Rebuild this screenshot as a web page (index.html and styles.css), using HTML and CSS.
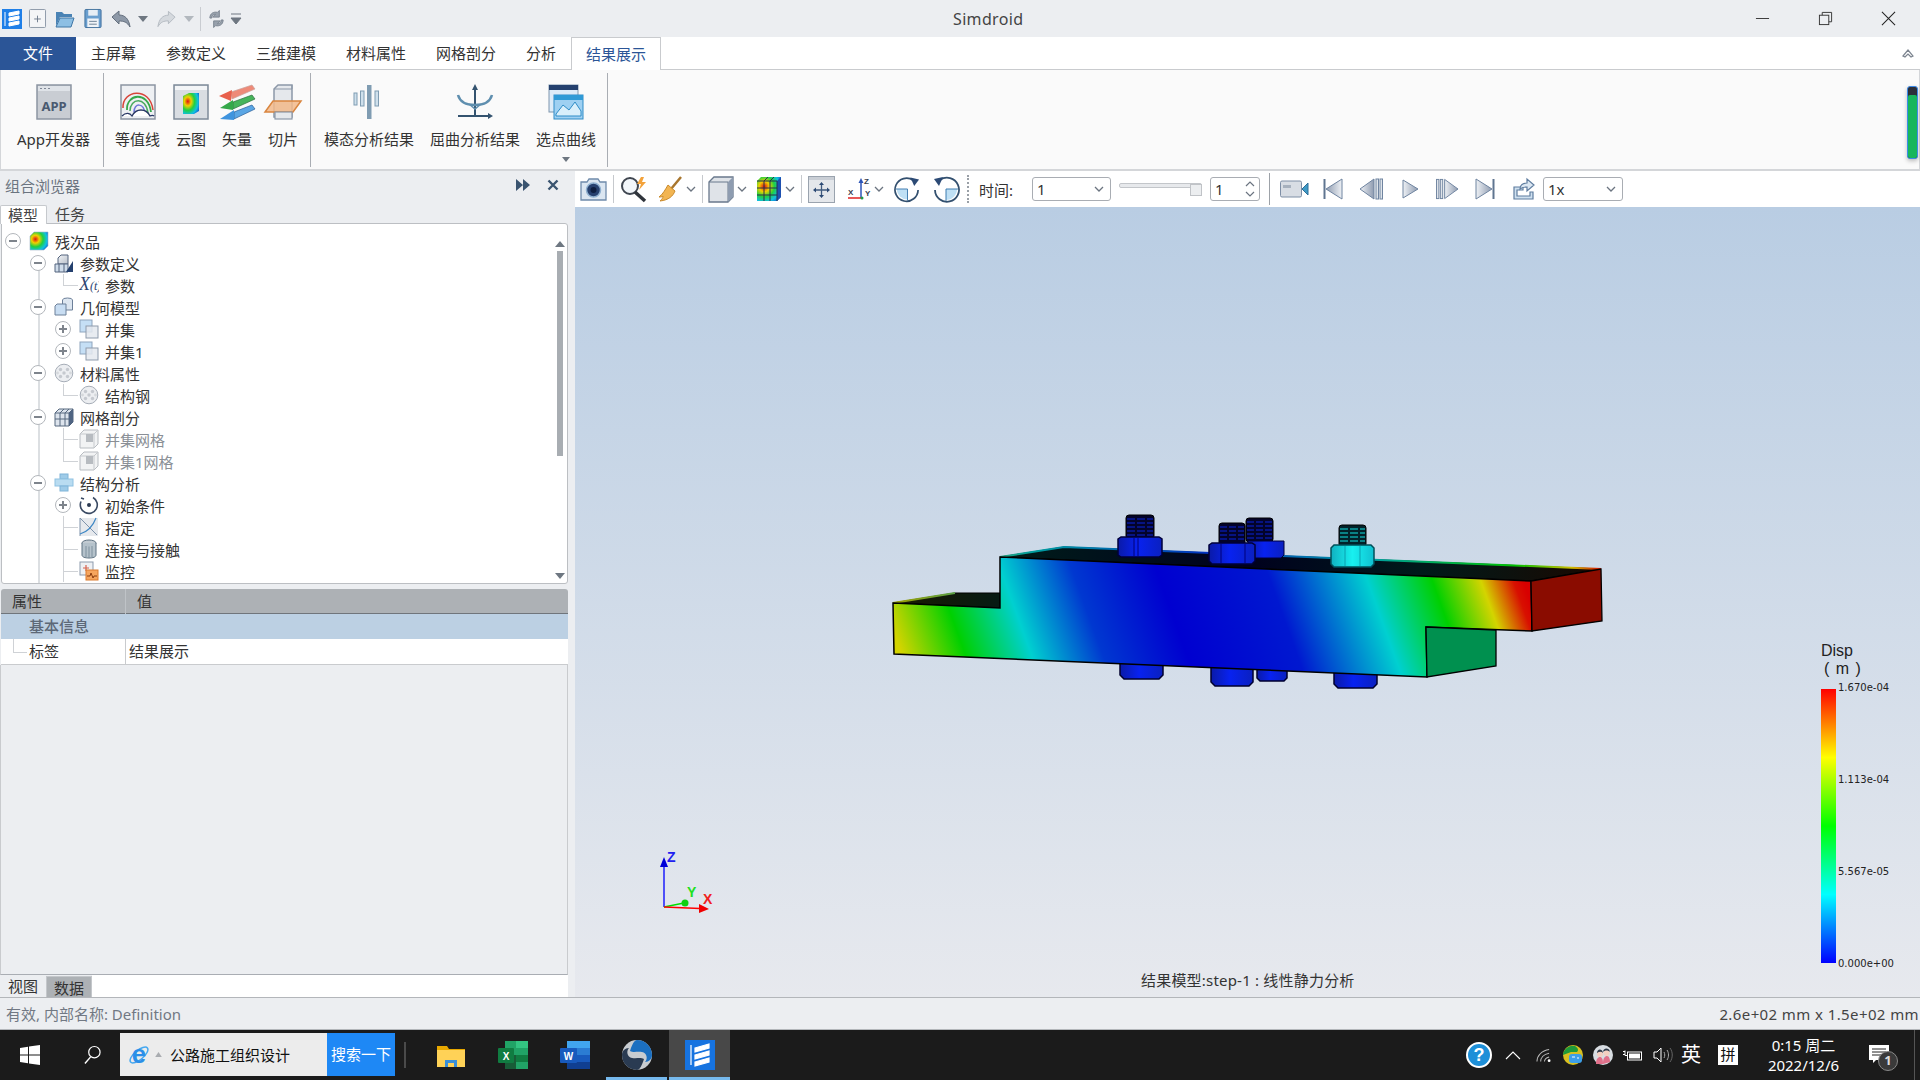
FILE: index.html
```html
<!DOCTYPE html>
<html lang="zh">
<head>
<meta charset="utf-8">
<title>Simdroid</title>
<link rel="stylesheet" href="styles.css">
</head>
<body>
<svg class="defs" aria-hidden="true">
  <defs>
    <radialGradient id="plot" cx="0.3" cy="0.4" r="0.85">
      <stop offset="0" stop-color="#e01010"/><stop offset=".25" stop-color="#f0d000"/><stop offset=".5" stop-color="#20d040"/><stop offset=".75" stop-color="#10c0e0"/><stop offset="1" stop-color="#1050d0"/>
    </radialGradient>
    <linearGradient id="steel" x1="0" y1="0" x2="1" y2="1"><stop offset="0" stop-color="#f2f4f7"/><stop offset="1" stop-color="#b8bfc9"/></linearGradient>
    <linearGradient id="transport" x1="0" y1="0" x2="1" y2="0"><stop offset="0" stop-color="#eef1f5"/><stop offset="1" stop-color="#8e9bb0"/></linearGradient>
    <linearGradient id="transportr" x1="1" y1="0" x2="0" y2="0"><stop offset="0" stop-color="#eef1f5"/><stop offset="1" stop-color="#8e9bb0"/></linearGradient>
    <linearGradient id="front" gradientUnits="userSpaceOnUse" x1="893" y1="630" x2="1466" y2="423">
      <stop offset="0" stop-color="#d4d400"/><stop offset=".098" stop-color="#00d000"/><stop offset=".2" stop-color="#00d0d0"/><stop offset=".31" stop-color="#0038d0"/><stop offset=".44" stop-color="#0000d0"/><stop offset=".61" stop-color="#0018d0"/><stop offset=".76" stop-color="#00d0d0"/><stop offset=".86" stop-color="#00d000"/><stop offset=".935" stop-color="#d4d400"/><stop offset=".985" stop-color="#d81000"/><stop offset="1" stop-color="#d80000"/>
    </linearGradient>
    <linearGradient id="topdark" gradientUnits="userSpaceOnUse" x1="893" y1="600" x2="1600" y2="570">
      <stop offset="0" stop-color="#1a1a00"/><stop offset=".2" stop-color="#001a1a"/><stop offset=".5" stop-color="#00001e"/><stop offset=".75" stop-color="#001a1a"/><stop offset="1" stop-color="#1a0800"/>
    </linearGradient>
    <linearGradient id="backedge" gradientUnits="userSpaceOnUse" x1="893" y1="600" x2="1600" y2="570">
      <stop offset="0" stop-color="#a0a000"/><stop offset=".2" stop-color="#00a0a0"/><stop offset=".45" stop-color="#0030c0"/><stop offset=".68" stop-color="#00a0a0"/><stop offset=".88" stop-color="#00c000"/><stop offset=".96" stop-color="#d0c000"/><stop offset="1" stop-color="#d01000"/>
    </linearGradient>
    <linearGradient id="nut" x1="0" y1="0" x2="1" y2="0"><stop offset="0" stop-color="#0a1aa8"/><stop offset=".45" stop-color="#0822f0"/><stop offset="1" stop-color="#0a20c0"/></linearGradient>
    <linearGradient id="nutc" x1="0" y1="0" x2="1" y2="0"><stop offset="0" stop-color="#10b0c0"/><stop offset=".5" stop-color="#18f0f0"/><stop offset="1" stop-color="#10c0d0"/></linearGradient>
    <symbol id="chev" viewBox="0 0 10 6"><path d="M1 1l4 4 4-4" fill="none" stroke="#6b7480" stroke-width="1.300"/></symbol>
    <symbol id="tri" viewBox="0 0 10 6"><path d="M0 0h10L5 6z" fill="#6e7781"/></symbol>
    <symbol id="i-plot" viewBox="0 0 20 20"><path d="M1 5l4-4h14v14l-4 4H1z" fill="url(#plot)" stroke="#9fb1c6" stroke-width=".6"/></symbol>
    <symbol id="i-param" viewBox="0 0 20 20"><path d="M4 5l3-3h7v9H4z" fill="url(#steel)" stroke="#54657e"/><path d="M1 11h13v8H1z" fill="#cfdcea" stroke="#54657e"/><path d="M5 11v8M10 11v8" stroke="#54657e"/><path d="M19 8v11h-7z" fill="#24406e"/></symbol>
    <symbol id="i-xt" viewBox="0 0 20 20"><text x="0" y="15" class="xt">X<tspan class="xts">(t)</tspan></text></symbol>
    <symbol id="i-geo" viewBox="0 0 20 20"><ellipse cx="13.500" cy="3" rx="5" ry="2" fill="#dfe8f2" stroke="#6d8099"/><path d="M8.500 3v10h10V3" fill="#dde6f0" stroke="#6d8099"/><path d="M1 9l2-2h9v11H1z" fill="#c8ddf2" stroke="#6d8099"/></symbol>
    <symbol id="i-union" viewBox="0 0 20 20"><rect x="1" y="1" width="12" height="12" fill="#c5dff5" stroke="#8fa5bd"/><rect x="7" y="7" width="12" height="12" fill="#e4e9ee" fill-opacity=".85" stroke="#8f9cac"/></symbol>
    <symbol id="i-mat" viewBox="0 0 20 20"><circle cx="10" cy="10" r="8.800" fill="#eceef1" stroke="#a6adb7"/><circle cx="6.500" cy="6.500" r="1.700" fill="#c5c9cf"/><circle cx="13.500" cy="6.500" r="1.700" fill="#c5c9cf"/><circle cx="10" cy="10" r="1.700" fill="#c5c9cf"/><circle cx="6.500" cy="13.500" r="1.700" fill="#c5c9cf"/><circle cx="13.500" cy="13.500" r="1.700" fill="#c5c9cf"/><circle cx="3.500" cy="10" r="1.400" fill="#d5d8dc"/><circle cx="16.500" cy="10" r="1.400" fill="#d5d8dc"/></symbol>
    <symbol id="i-mesh" viewBox="0 0 20 20"><path d="M1 6l4-4h14v13l-4 4H1z" fill="#dde4ed" stroke="#56687f"/><path d="M1 6h14v13M15 6l4-4M6 6v13M11 6v13M1 12h14M6 6l4-4M11 6l4-4" fill="none" stroke="#56687f"/><path d="M15 6l4-4v13l-4 4z" fill="#4f6482"/></symbol>
    <symbol id="i-meshitem" viewBox="0 0 20 20"><path d="M1 5l4-4h14v14l-4 4H1z" fill="#f2f3f4" stroke="#b8bcc1"/><path d="M1 5h14v14M15 5l4-4" fill="none" stroke="#c6c9cd"/><rect x="7" y="5" width="7" height="8" fill="#b7bbc0"/></symbol>
    <symbol id="i-struct" viewBox="0 0 20 20"><rect x="6" y="1" width="8" height="5" fill="#9ecbe8" stroke="#7fb4d8"/><rect x="1" y="6" width="18" height="7" fill="#b9dcf1" stroke="#8fc2e2"/><rect x="6" y="13" width="8" height="5" fill="#9ecbe8" stroke="#7fb4d8"/></symbol>
    <symbol id="i-init" viewBox="0 0 20 20"><path d="M14 2.500A8.500 8.500 0 1 1 2 6.500" fill="none" stroke="#3a4a63" stroke-width="1.600"/><path d="M2 3l3 1" stroke="#3a4a63" stroke-width="1.600"/><circle cx="10" cy="10" r="2" fill="#2b3a52"/></symbol>
    <symbol id="i-assign" viewBox="0 0 20 20"><rect x="1" y="1" width="18" height="18" fill="#e6e9ed"/><path d="M1 1v18M1 1l17 17" fill="none" stroke="#7f93ab"/><path d="M1 17C8 15 14 9 17 1" fill="none" stroke="#3f88c5" stroke-width="1.200"/></symbol>
    <symbol id="i-contact" viewBox="0 0 20 20"><ellipse cx="10" cy="4" rx="7" ry="3" fill="#c2cbd2" stroke="#5f7382"/><path d="M3 4v12c0 2 3 3 7 3s7-1 7-3V4" fill="#b5c2cb" stroke="#5f7382"/><path d="M7 7v11M10 7.500V19M13 7v11" stroke="#7f919e"/></symbol>
    <symbol id="i-monitor" viewBox="0 0 20 20"><rect x="1" y="1" width="13" height="13" fill="#eef0f3" stroke="#8d9bad"/><path d="M4 7h6M7 4v6" stroke="#d6604d" stroke-width="1.200"/><rect x="7" y="9" width="12" height="10" fill="#f6a55e" stroke="#d97a2e"/><path d="M8 15h3l1-3 2 5 1-2h3" fill="none" stroke="#8a3c0f"/></symbol>
  </defs>
</svg>

<div class="app">
  <header class="titlebar">
    <div class="qat">
      <svg class="q-app" viewBox="0 0 20 20"><rect width="20" height="20" fill="#1f7fe8"/><path d="M3 3v14M7 4l10-2v3L7 7zM7 9l10-2v3L7 12zM7 14l10-2v3l-10 2z" fill="#fff" stroke="#fff"/></svg>
      <svg class="q-new" viewBox="0 0 18 20"><rect x=".5" y=".5" width="17" height="19" rx="1" fill="#f4f5f7" stroke="#8b97a6"/><path d="M9 7v7M5.500 10.500h7" stroke="#6e7b8c"/></svg>
      <svg class="q-open" viewBox="0 0 20 18"><path d="M1 16V2h6l2 2h8v3H5L1 16z" fill="#4a83b5"/><path d="M1 17l4-9h14l-3 9z" fill="#8dbfe4" stroke="#3f76a6"/></svg>
      <svg class="q-save" viewBox="0 0 18 20"><rect x=".5" y=".5" width="17" height="19" rx="1" fill="#6a9fcf" stroke="#3f6f9c"/><rect x="4" y="1" width="10" height="6" fill="#e7eef5"/><rect x="3" y="10" width="12" height="9" fill="#f0f3f7"/><path d="M5 13h8M5 16h8" stroke="#6a7f94"/></svg>
      <svg class="q-undo" viewBox="0 0 20 20"><path d="M1 8l7-6v4c6 0 10 4 11 12-3-5-6-6-11-6v3z" fill="#8e99a8" stroke="#636e7d"/></svg>
      <svg class="q-drop1"><use href="#tri"/></svg>
      <svg class="q-redo" viewBox="0 0 20 20"><path d="M19 8l-7-6v4C6 6 2 10 1 18c3-5 6-6 11-6v3z" fill="#d5d9de" stroke="#b3b9c1"/></svg>
      <svg class="q-drop2"><use href="#tri"/></svg>
      <i class="q-sep"></i>
      <svg class="q-ref" viewBox="0 0 18 20"><path d="M2 9c0-5 4-7 8-6l2-2v7H5l3-3C6 5 4 6 4 9z" fill="#8f99a5" stroke="#6f7986"/><path d="M16 11c0 5-4 7-8 6l-2 2v-7h7l-3 3c2 0 4-1 4-4z" fill="#8f99a5" stroke="#6f7986"/></svg>
      <svg class="q-more" viewBox="0 0 10 12"><path d="M0 1h10M0 5h10L5 11z" fill="#6e7781" stroke="#6e7781"/></svg>
    </div>
    <div class="title">Simdroid</div>
    <div class="winctl">
      <svg class="w-min" viewBox="0 0 16 16"><path d="M1 8h14" stroke="#333"/></svg>
      <svg class="w-res" viewBox="0 0 16 16"><rect x="1.500" y="4.500" width="10" height="10" fill="none" stroke="#333"/><path d="M4.500 4.500v-3h10v10h-3" fill="none" stroke="#333"/></svg>
      <svg class="w-close" viewBox="0 0 16 16"><path d="M1 1l14 14M15 1L1 15" stroke="#222" stroke-width="1.100"/></svg>
    </div>
  </header>

  <nav class="tabs">
    <div class="tab file">文件</div>
    <div class="tab">主屏幕</div>
    <div class="tab">参数定义</div>
    <div class="tab">三维建模</div>
    <div class="tab">材料属性</div>
    <div class="tab">网格剖分</div>
    <div class="tab">分析</div>
    <div class="tab active">结果展示</div>
    <svg class="collapse" viewBox="0 0 12 10"><path d="M1 8l5-6 5 6-2 1-3-3-3 3z" fill="#fff" stroke="#7d8590" stroke-width="1.200"/></svg>
  </nav>

  <section class="ribbon">
    <div class="rgroup g1">
      <div class="ritem">
        <svg class="ric" viewBox="0 0 36 36"><rect x="1" y="1" width="34" height="34" fill="#c9cdd3" stroke="#8c95a2" stroke-width="1.500"/><rect x="2" y="2" width="32" height="5" fill="#dfe3e8"/><path d="M4 4.500h2M8 4.500h2M12 4.500h2" stroke="#7f8896"/><text x="18" y="27" class="apptxt">APP</text></svg>
        <span>App开发器</span>
      </div>
    </div>
    <div class="rgroup g2">
      <div class="ritem">
        <svg class="ric" viewBox="0 0 36 36"><rect x="1" y="1" width="34" height="34" fill="#eef0f3" stroke="#8c95a2" stroke-width="1.500"/><path d="M3 24C2 6 30 2 33 26" fill="none" stroke="#d8453a" stroke-width="1.500"/><path d="M7 26C6 10 28 6 31 28" fill="none" stroke="#35a84a" stroke-width="1.800"/><path d="M10 27C10 14 26 12 28 29" fill="none" stroke="#4aaa60" stroke-width="1.500"/><path d="M14 28c0-9 10-10 11 2" fill="none" stroke="#6f78d8" stroke-width="1.500"/><path d="M2 32c4-4 8-3 10 0 4-8 14-8 18 0 2-1 3-1 4 0" fill="#fff" stroke="#2b3a66" stroke-width="1.300"/></svg>
        <span>等值线</span>
      </div>
      <div class="ritem">
        <svg class="ric" viewBox="0 0 36 36"><rect x="1" y="1" width="34" height="34" fill="#d9dde2" stroke="#7e8a99" stroke-width="1.500"/><rect x="2" y="2" width="32" height="4" fill="#f3f5f7"/><path d="M10 12l6-3h10v18l-5 3H10z" fill="url(#plot)"/></svg>
        <span>云图</span>
      </div>
      <div class="ritem">
        <svg class="ric" viewBox="0 0 36 36"><path d="M12 8L33 1l3 4-23 10z" fill="#ee8a78" stroke="#c9a39c" stroke-width=".7"/><path d="M0 12l13-6-1 11z" fill="#e8604c"/><path d="M14 18l19-7 3 4-22 10z" fill="#46b45a" stroke="#2f6f3f" stroke-width=".7"/><path d="M1 24l13-8v10z" fill="#35a84a"/><path d="M15 28l18-7 3 4-21 10z" fill="#5aa6e4" stroke="#2b5f98" stroke-width=".7"/><path d="M1 35l14-9v10z" fill="#3f94de"/></svg>
        <span>矢量</span>
      </div>
      <div class="ritem">
        <svg class="ric" viewBox="0 0 36 36"><path d="M9 5l4-4h14v32H9z" fill="#e5e8ec" stroke="#8c98a8" stroke-width="1.500"/><path d="M9 5h18V1" fill="none" stroke="#8c98a8"/><path d="M8 17h28l-8 11H0z" fill="#f2b98a" fill-opacity=".85" stroke="#d9853f" stroke-width="1.500"/><rect x="10" y="28" width="17" height="7" fill="#e5e8ec" stroke="#8c98a8" stroke-width="1.200"/></svg>
        <span>切片</span>
      </div>
    </div>
    <div class="rgroup g3">
      <div class="ritem">
        <svg class="ric" viewBox="0 0 36 36"><rect x="16" y="1" width="4.500" height="34" fill="#7f9cb2"/><rect x="9.500" y="7" width="3.500" height="15" fill="#cfe0ec" stroke="#7f9cb2"/><rect x="24" y="7" width="3.500" height="15" fill="#cfe0ec" stroke="#7f9cb2"/><rect x="3" y="9" width="3" height="12" fill="#cfe0ec" stroke="#7f9cb2"/></svg>
        <span>模态分析结果</span>
      </div>
      <div class="ritem">
        <svg class="ric" viewBox="0 0 36 36"><path d="M18 5v27M1 32h32" stroke="#34536f" stroke-width="2"/><path d="M18 0l-3 6h6zM36 32l-5-3v6z" fill="#34536f"/><path d="M1 11c2 7 9 10 17 10s15-3 17-10" fill="none" stroke="#5f8faf" stroke-width="2.500"/><path d="M12 20l6 5 6-5" fill="none" stroke="#5f8faf" stroke-width="1.500"/></svg>
        <span>屈曲分析结果</span>
      </div>
      <div class="ritem">
        <svg class="ric" viewBox="0 0 36 36"><rect x="1" y="1" width="29" height="27" fill="#dcebf8" stroke="#7f96ad"/><rect x="1" y="1" width="29" height="5" fill="#24406e"/><rect x="6" y="11" width="29" height="24" fill="#9ed0f2" stroke="#2f8cc7"/><rect x="6" y="11" width="29" height="5" fill="#2f9ad6"/><path d="M8 30l7-9 6 5 6-8 6 9v5H8z" fill="#d9effb" stroke="#2f8cc7"/></svg>
        <span>选点曲线</span>
        <svg class="rdrop"><use href="#tri"/></svg>
      </div>
    </div>
    <div class="meter"><i></i></div>
  </section>

  <main class="main">
    <aside class="panel">
      <div class="phead">
        <span>组合浏览器</span>
        <svg class="p-ff" viewBox="0 0 14 12"><path d="M0 0l7 6-7 6zM7 0l7 6-7 6z" fill="#3a5470"/></svg>
        <svg class="p-x" viewBox="0 0 12 12"><path d="M1.500 1.500l9 9M10.500 1.500l-9 9" stroke="#3a5470" stroke-width="2.400"/></svg>
      </div>
      <div class="ptabs"><div class="ptab on">模型</div><div class="ptab">任务</div></div>
      <div class="tree">
        <div class="row l0"><i class="exp"></i><svg class="ti"><use href="#i-plot"/></svg><span>残次品</span></div>
        <div class="row l1"><i class="exp"></i><svg class="ti"><use href="#i-param"/></svg><span>参数定义</span></div>
        <div class="row l2 br end"><i class="noexp"></i><svg class="ti"><use href="#i-xt"/></svg><span>参数</span></div>
        <div class="row l1"><i class="exp"></i><svg class="ti"><use href="#i-geo"/></svg><span>几何模型</span></div>
        <div class="row l2"><i class="exp plus"></i><svg class="ti"><use href="#i-union"/></svg><span>并集</span></div>
        <div class="row l2"><i class="exp plus"></i><svg class="ti"><use href="#i-union"/></svg><span>并集1</span></div>
        <div class="row l1"><i class="exp"></i><svg class="ti"><use href="#i-mat"/></svg><span>材料属性</span></div>
        <div class="row l2 br end"><i class="noexp"></i><svg class="ti"><use href="#i-mat"/></svg><span>结构钢</span></div>
        <div class="row l1"><i class="exp"></i><svg class="ti"><use href="#i-mesh"/></svg><span>网格剖分</span></div>
        <div class="row l2 br dim"><i class="noexp"></i><svg class="ti"><use href="#i-meshitem"/></svg><span>并集网格</span></div>
        <div class="row l2 br end dim"><i class="noexp"></i><svg class="ti"><use href="#i-meshitem"/></svg><span>并集1网格</span></div>
        <div class="row l1"><i class="exp"></i><svg class="ti"><use href="#i-struct"/></svg><span>结构分析</span></div>
        <div class="row l2"><i class="exp plus"></i><svg class="ti"><use href="#i-init"/></svg><span>初始条件</span></div>
        <div class="row l2 br"><i class="noexp"></i><svg class="ti"><use href="#i-assign"/></svg><span>指定</span></div>
        <div class="row l2 br"><i class="noexp"></i><svg class="ti"><use href="#i-contact"/></svg><span>连接与接触</span></div>
        <div class="row l2 br"><i class="noexp"></i><svg class="ti"><use href="#i-monitor"/></svg><span>监控</span></div>
        <i class="sb-up"></i><i class="sb-thumb"></i><i class="sb-down"></i>
      </div>
      <div class="props">
        <div class="pr ph"><div>属性</div><div>值</div></div>
        <div class="pr pg"><div>基本信息</div></div>
        <div class="pr pv"><div>标签</div><div>结果展示</div></div>
      </div>
      <div class="pfill"></div>
      <div class="btabs"><div class="btab on">视图</div><div class="btab gray">数据</div><div class="bstrip"></div></div>
    </aside>

    <div class="work">
      <div class="toolbar">
        <svg class="t-cam" viewBox="0 0 27 24"><path d="M1 5h6l2-3h9l2 3h6v18H1z" fill="#dbe6f1" stroke="#6f8bab" stroke-width="1.300"/><circle cx="13.500" cy="13" r="7" fill="#26406e" stroke="#8fb0d0" stroke-width="1.500"/><circle cx="13.500" cy="13" r="3" fill="#0e1e40"/></svg>
        <i class="tsep s1"></i>
        <svg class="t-mag" viewBox="0 0 29 26"><circle cx="10" cy="10" r="8" fill="#f2f6fa" stroke="#3f4650" stroke-width="2"/><path d="M15 16l10 9" stroke="#2f343b" stroke-width="3.500"/><path d="M21 1l-4 7h4l-2 6 7-8h-4l2-5z" fill="#f3a23a"/></svg>
        <svg class="t-broom" viewBox="0 0 25 26"><path d="M23 1L13 13" stroke="#a8762e" stroke-width="2.500"/><path d="M10 9l7 6c-2 5-6 9-15 10 2-2 3-3 3-5-1 1-2 1-4 1 4-3 6-7 9-12z" fill="#f2b552" stroke="#c98a2c"/></svg>
        <svg class="t-chev"><use href="#chev"/></svg>
        <i class="tsep s2"></i>
        <svg class="t-box" viewBox="0 0 26 27"><path d="M1 6l5-5h19v20l-5 5H1z" fill="#dfe3e8" stroke="#69788c" stroke-width="1.300"/><path d="M1 6h19v20" fill="none" stroke="#69788c"/><path d="M20 6l5-5v20l-5 5z" fill="#8e9cb0"/></svg>
        <svg class="t-chev"><use href="#chev"/></svg>
        <svg class="t-grid" viewBox="0 0 26 26"><path d="M1 5l4-4h20v20l-4 4H1z" fill="url(#plot)"/><path d="M21 5l4-4v20l-4 4z" fill="#1e50b0"/><path d="M1 5h20v20M8 5v20M14 5v20M1 12h20M1 19h20M8 5l4-4M14 5l4-4" fill="none" stroke="#26304a"/></svg>
        <svg class="t-chev"><use href="#chev"/></svg>
        <i class="tsep s3"></i>
        <svg class="t-fit" viewBox="0 0 27 27"><rect x=".5" y=".5" width="26" height="26" fill="#e4e7eb" stroke="#9aa3ae"/><rect x="1" y="1" width="25" height="3" fill="#c9ced5"/><path d="M13.500 8v12M7 14h13" stroke="#3f5a7e" stroke-width="1.300"/><path d="M13.500 6l-2.500 3h5zM13.500 22l-2.500-3h5zM5 14l3-2.500v5zM22 14l-3-2.500v5z" fill="#2c4a75"/></svg>
        <svg class="t-axes" viewBox="0 0 24 24"><path d="M14 4v17" stroke="#2c55b8" stroke-width="1.500"/><path d="M14 1l-2.500 5h5z" fill="#2c55b8"/><path d="M1 21h13" stroke="#e02020" stroke-width="1.500"/><circle cx="15" cy="21" r="1.500" fill="#1f9a4a"/><text x="17" y="7" class="ax">Z</text><text x="1" y="18" class="ax">X</text><text x="18" y="19" class="ax">Y</text></svg>
        <svg class="t-chev ax-chev"><use href="#chev"/></svg>
        <svg class="t-rot" viewBox="0 0 26 26"><path d="M19 4A12 12 0 1 0 24 14" fill="none" stroke="#33506f" stroke-width="1.800"/><path d="M16 1l9 2-5 7z" fill="#2c4a75"/><path d="M2 13h11v11A11 11 0 0 1 2 13z" fill="#bfe0f5"/><path d="M1 13h12v12" fill="none" stroke="#3f7cb0"/></svg>
        <svg class="t-rot2" viewBox="0 0 26 26"><path d="M7 4A12 12 0 1 1 2 14" fill="none" stroke="#33506f" stroke-width="1.800"/><path d="M10 1L1 3l5 7z" fill="#2c4a75"/><path d="M24 13H13v11a11 11 0 0 0 11-11z" fill="#bfe0f5"/><path d="M25 13H13v12" fill="none" stroke="#3f7cb0"/></svg>
        <i class="tdots"></i>
        <span class="tlabel">时间:</span>
        <div class="sel s-time"><span>1</span><svg class="t-chev2"><use href="#chev"/></svg></div>
        <div class="slider"><i class="track"></i><i class="thumb"></i></div>
        <div class="sel spin"><span>1</span><svg class="updown" viewBox="0 0 10 20"><path d="M1 7l4-4 4 4M1 13l4 4 4-4" fill="none" stroke="#6b7480" stroke-width="1.200"/></svg></div>
        <i class="tsep s4"></i>
        <svg class="t-rec" viewBox="0 0 29 18"><rect x=".5" y="1" width="21" height="16" rx="1.500" fill="#d8dde4" stroke="#7e8fa6"/><rect x="3" y="5" width="8" height="3" fill="#a7b1be"/><path d="M22 9l6-6v12z" fill="#3f9ac6" stroke="#2e6f98"/></svg>
        <svg class="t-first" viewBox="0 0 20 22"><path d="M1.500 1v20" stroke="#5f7590" stroke-width="2"/><path d="M3 11L19 1v20z" fill="url(#transportr)" stroke="#6f84a0"/></svg>
        <svg class="t-prev" viewBox="0 0 24 22"><path d="M1 11L15 1v20z" fill="url(#transport)" stroke="#6f84a0"/><rect x="17" y="1" width="2.500" height="20" fill="#dfe4ea" stroke="#6f84a0"/><rect x="21" y="1" width="2.500" height="20" fill="#dfe4ea" stroke="#6f84a0"/></svg>
        <svg class="t-play" viewBox="0 0 17 20"><path d="M1 1l15 9-15 9z" fill="url(#transport)" stroke="#6f84a0"/></svg>
        <svg class="t-next" viewBox="0 0 24 22"><rect x=".5" y="1" width="2.500" height="20" fill="#dfe4ea" stroke="#6f84a0"/><rect x="4.500" y="1" width="2.500" height="20" fill="#dfe4ea" stroke="#6f84a0"/><path d="M9 1l14 10L9 21z" fill="url(#transport)" stroke="#6f84a0"/></svg>
        <svg class="t-last" viewBox="0 0 20 22"><path d="M18.500 1v20" stroke="#5f7590" stroke-width="2"/><path d="M17 11L1 1v20z" fill="url(#transport)" stroke="#6f84a0"/></svg>
        <svg class="t-exp" viewBox="0 0 23 22"><path d="M2 9v12h19v-7h-3v4H5V12h6V9z" fill="#cfe0ef" stroke="#5f7d9f" stroke-width="1.200"/><path d="M8 11c0-4 3-6 7-6V1l7 6-7 6V9c-3 0-5 0-7 2z" fill="#dbe7f2" stroke="#5f7d9f" stroke-width="1.200"/></svg>
        <div class="sel s-speed"><span>1x</span><svg class="t-chev2"><use href="#chev"/></svg></div>
      </div>

      <div class="viewport">
        <svg class="model" viewBox="575 207 1345 790">
          <!-- lower bolt heads -->
          <g stroke="#00002e" stroke-width="1.500">
            <path d="M1120 660h43v15l-4 4h-35l-4-4z" fill="url(#nut)"/>
            <path d="M1257 664h30v14l-3 3h-24l-3-3z" fill="url(#nut)"/>
            <path d="M1211 664h42v18l-4 4h-34l-4-4z" fill="url(#nut)"/>
            <path d="M1334 668h43v16l-4 4h-35l-4-4z" fill="url(#nut)"/>
          </g>
          <!-- top surfaces -->
          <path d="M893 603l62-10h45v15z" fill="url(#topdark)" stroke="#000"/>
          <path d="M1000 557l64-10 537 22-70 12z" fill="url(#topdark)" stroke="#000"/>
          <path d="M893 603l62-10M1000 557l64-10 537 22" fill="none" stroke="url(#backedge)" stroke-width="2"/>
          <!-- upper bolts: threads and nuts -->
          <g>
            <rect x="1246" y="518" width="27" height="24" rx="3" fill="#03032a" stroke="#000"/>
            <path d="M1247 522h25M1247 526h25M1247 530h25M1247 534h25M1247 538h25" stroke="#0a24d8" stroke-dasharray="7 2"/>
            <path d="M1248 541h36v14l-3 3h-30l-3-3z" fill="url(#nut)" stroke="#00003a"/>
          </g>
          <g>
            <rect x="1126" y="515" width="28" height="24" rx="3" fill="#03032a" stroke="#000"/>
            <path d="M1127 519h26M1127 523h26M1127 527h26M1127 531h26M1127 535h26" stroke="#0a24d8" stroke-dasharray="8 2"/>
            <path d="M1118 539l3-2h38l3 2v16l-3 2h-38l-3-2z" fill="url(#nut)" stroke="#00003a" stroke-width="1.500"/>
            <path d="M1134 538v18M1138 538v18" stroke="#00007a"/>
          </g>
          <g>
            <rect x="1219" y="523" width="26" height="23" rx="3" fill="#03032a" stroke="#000"/>
            <path d="M1220 527h24M1220 531h24M1220 535h24M1220 539h24" stroke="#0a24d8" stroke-dasharray="7 2"/>
            <path d="M1209 545l3-2h40l3 2v16l-3 3h-40l-3-3z" fill="url(#nut)" stroke="#00003a" stroke-width="1.500"/>
            <path d="M1221 544v19M1245 544v19" stroke="#00007a"/>
          </g>
          <g>
            <rect x="1339" y="525" width="27" height="22" rx="3" fill="#02222a" stroke="#000"/>
            <path d="M1340 529h25M1340 533h25M1340 537h25M1340 541h25" stroke="#10e0e0" stroke-dasharray="8 2"/>
            <path d="M1331 548l3-3h37l3 3v16l-3 3h-37l-3-3z" fill="url(#nutc)" stroke="#00505a" stroke-width="1.500"/>
            <path d="M1345 546v20M1360 546v20" stroke="#0aa0b0"/>
          </g>
          <!-- faces -->
          <path d="M893 603l107 5v-51l531 24 1 50-106-4 1 50-533-23z" fill="url(#front)" stroke="#000" stroke-width="1.500"/>
          <path d="M1531 581l70-12 1 52-70 10z" fill="#8a0c00" stroke="#000" stroke-width="1.300"/>
          <path d="M1426 627l70 3v36l-69 11z" fill="#00904f" stroke="#000" stroke-width="1.300"/>
          <!-- axis triad -->
          <path d="M664 907v-44" stroke="#0000ff" stroke-width="1.300"/>
          <path d="M664 857l-4 10h8z" fill="#0000d8"/>
          <path d="M664 907l20-4" stroke="#00e000" stroke-width="1.300"/>
          <circle cx="685" cy="903" r="3.500" fill="#10d010"/>
          <path d="M664 907l36 1.500" stroke="#ff0000" stroke-width="1.300"/>
          <path d="M709 909l-10-5v9z" fill="#f00000"/>
          <text x="667" y="862" class="tz">Z</text>
          <text x="687" y="897" class="ty">Y</text>
          <text x="703" y="904" class="tx">X</text>
        </svg>
        <div class="legend">
          <div class="lg-title">Disp</div>
          <div class="lg-title lg-unit">( m )</div>
          <div class="lg-body">
            <div class="lg-bar"></div>
            <div class="lg-labels"><span>1.670e-04</span><span>1.113e-04</span><span>5.567e-05</span><span>0.000e+00</span></div>
          </div>
        </div>
        <div class="caption">结果模型:step-1 : 线性静力分析</div>
      </div>
    </div>
  </main>

  <div class="status"><span>有效, 内部名称: Definition</span><span class="dims">2.6e+02 mm x 1.5e+02 mm</span></div>

  <footer class="taskbar">
    <svg class="b-win" viewBox="0 0 20 20"><path d="M0 3l8-1.200V9.500H0zM9 1.600L20 0v9.500H9zM0 10.500h8v7.700l-8-1.200zM9 10.500h11V20L9 18.400z" fill="#fff"/></svg>
    <svg class="b-find" viewBox="0 0 18 20"><circle cx="11" cy="7" r="6" fill="none" stroke="#fff" stroke-width="1.300"/><path d="M7 12l-6 7" stroke="#fff" stroke-width="1.500"/></svg>
    <div class="bsearch">
      <svg class="b-ie" viewBox="0 0 24 28"><ellipse cx="12" cy="14" rx="12" ry="5" fill="none" stroke="#45a8f0" stroke-width="1.600" transform="rotate(-40 12 14)"/><text x="12" y="23" class="ie">e</text></svg>
      <svg class="b-mini" viewBox="0 0 8 6"><path d="M4 0l4 6H0z" fill="#a9acb0"/></svg>
      <span class="bq">公路施工组织设计</span>
      <span class="bgo">搜索一下</span>
    </div>
    <i class="bsep"></i>
    <div class="bapp a-folder"><svg viewBox="0 0 28 24"><path d="M0 3h10l2 3h16v18H0z" fill="#e8a800"/><rect y="7" width="28" height="17" fill="#ffd257"/><path d="M8 24v-7h12v7h-3v-4h-6v4z" fill="#3a8fd8"/></svg></div>
    <div class="bapp a-excel"><svg viewBox="0 0 30 28"><rect x="7" width="23" height="28" fill="#21a366"/><rect x="18" y="0" width="12" height="7" fill="#33c481"/><rect x="18" y="14" width="12" height="7" fill="#107c41"/><rect x="7" y="14" width="11" height="14" fill="#185c37"/><rect x="0" y="7" width="16" height="15" rx="1" fill="#107c41"/><text x="8" y="19" class="xl">X</text></svg></div>
    <div class="bapp a-word"><svg viewBox="0 0 30 28"><rect x="7" width="23" height="7" fill="#41a5ee"/><rect x="7" y="7" width="23" height="7" fill="#2b7cd3"/><rect x="7" y="14" width="23" height="7" fill="#185abd"/><rect x="7" y="21" width="23" height="7" fill="#103f91"/><rect x="0" y="7" width="17" height="15" rx="1" fill="#185abd"/><text x="8.500" y="19" class="xl">W</text></svg></div>
    <div class="bapp a-sim on1"><svg viewBox="0 0 30 30"><circle cx="15" cy="15" r="15" fill="#c8ccd0"/><path d="M15 0a15 15 0 0 1 15 15c0 4-3 7-7 7 3-3 2-9-3-10-5-1-8 1-12-1 2-6 4-11 7-11z" fill="#1b6fc0"/><path d="M15 30A15 15 0 0 1 0 15c0-4 3-7 7-7-3 3-2 9 3 10 5 1 8-1 12 1-2 6-4 11-7 11z" fill="#2a3b52"/></svg></div>
    <div class="bapp a-cur on2"><svg viewBox="0 0 30 30"><rect width="30" height="30" fill="#1673e0"/><path d="M6 5v20M10 8l14-4v4L10 12zM10 15l14-4v4l-14 4zM10 22l14-4v4l-14 4z" fill="#fff" stroke="#fff" stroke-width="1.200"/></svg></div>

    <div class="tray">
      <svg class="y-help" viewBox="0 0 26 26"><circle cx="13" cy="13" r="12" fill="#1d8fd8" stroke="#fff" stroke-width="2"/><text x="13" y="19" class="qm">?</text></svg>
      <svg class="y-up" viewBox="0 0 16 9"><path d="M1 8l7-7 7 7" fill="none" stroke="#fff" stroke-width="1.100"/></svg>
      <svg class="y-wifi" viewBox="0 0 16 15"><path d="M1 14C1 8 6 2 14 1M5 14c0-4 3-8 9-9M9 14c0-2 1-4 5-5" fill="none" stroke="#bbb" stroke-width="1.100"/><circle cx="14" cy="13" r="1.500" fill="#fff"/></svg>
      <svg class="y-game" viewBox="0 0 20 20"><circle cx="10" cy="10" r="10" fill="#d8c020"/><path d="M0 10a10 10 0 0 1 12-9c3 2 4 4 2 6H8z" fill="#1e9a3a"/><rect x="6" y="9" width="13" height="9" rx="3" fill="#3d9fe8"/><path d="M9 12h3M14 13h2" stroke="#fff"/></svg>
      <svg class="y-ava" viewBox="0 0 20 20"><circle cx="10" cy="10" r="10" fill="#d8dde2"/><circle cx="7" cy="9" r="3" fill="#f4cfc0"/><circle cx="13.500" cy="8" r="3" fill="#f4cfc0"/><path d="M3 19c0-5 2-7 4-7s3 2 3 7zM10 19c0-6 2-8 4-8s3 3 3 6z" fill="#e0708a"/><path d="M4 8c0-4 5-5 6 0-2-2-4-1-6 0zM10 7c0-4 6-5 7 0-2-2-5-2-7 0z" fill="#2f3a48"/></svg>
      <svg class="y-bat" viewBox="0 0 20 12"><path d="M0 2h2M0 5h2M2 1v5h2" stroke="#fff"/><rect x="4.500" y="2.500" width="14" height="8" fill="#111" stroke="#fff"/><rect x="6" y="4" width="11" height="5" fill="#fff"/></svg>
      <svg class="y-vol" viewBox="0 0 20 16"><path d="M1 5h3l4-4v14l-4-4H1z" fill="none" stroke="#fff"/><path d="M11 5c1 2 1 4 0 6M14 3c2 3 2 7 0 10" fill="none" stroke="#aaa"/><path d="M17 1c3 4 3 10 0 14" fill="none" stroke="#666"/></svg>
      <span class="y-ime">英</span>
      <span class="y-pin">拼</span>
      <div class="clock"><span>0:15 周二</span><span>2022/12/6</span></div>
      <div class="notify">
        <svg viewBox="0 0 20 18"><path d="M0 0h20v15H7l-3 3v-3H0z" fill="#fff"/><path d="M3 4h14M3 7h14M3 10h10" stroke="#222"/></svg>
        <span class="badge">1</span>
      </div>
      <i class="edge"></i>
    </div>
  </footer>
</div>
</body>
</html>
```

FILE: styles.css
```css
*{box-sizing:border-box}
html,body{margin:0;padding:0}
body{width:1920px;height:1080px;overflow:hidden;font-family:"Noto Sans","Noto Sans CJK SC",sans-serif;font-size:15px;color:#333;background:#eceef1}
svg{display:block;flex:none;overflow:visible}
i{display:block;flex:none}
.defs{position:absolute;width:0;height:0}
.app{display:flex;flex-direction:column;height:1080px}

/* title bar */
.titlebar{height:37px;display:flex;align-items:center;background:#eceef1;flex:none}
.qat{display:flex;align-items:center;width:953px;padding-left:2px}
.q-app{width:20px;height:20px}
.q-new{width:17px;height:19px;margin-left:7px}
.q-open{width:20px;height:18px;margin-left:9px}
.q-save{width:18px;height:19px;margin-left:9px}
.q-undo{width:20px;height:20px;margin-left:9px}
.q-drop1,.q-drop2{width:10px;height:6px;margin-left:7px}
.q-redo{width:19px;height:20px;margin-left:9px}
.q-drop2{margin-left:8px;opacity:.45}
.q-sep{width:1px;height:24px;background:#c9ccd1;margin-left:6px}
.q-ref{width:17px;height:20px;margin-left:7px;opacity:.9}
.q-more{width:10px;height:12px;margin-left:6px}
.title{font-size:16px;color:#444;letter-spacing:.35px}
.winctl{margin-left:auto;display:flex;align-items:center}
.w-min{width:15px;height:15px;margin-right:48px}
.w-res{width:15px;height:15px;margin-right:48px}
.w-close{width:15px;height:15px;margin-right:24px}

/* tabs */
.tabs{height:33px;flex:none;background:#fff;display:flex;align-items:stretch;position:relative;border-bottom:1px solid #c9cbce;color:#333}
.tab{padding:0 15px;line-height:32px;white-space:nowrap}
.tab.file{width:76px;background:#2b5597;color:#fff;padding:0;text-align:center;margin-bottom:-1px}
.tab.active{width:90px;color:#2b5597;padding:0 14px;background:#fff;border:1px solid #c9cbce;border-bottom:0;margin-bottom:-1px;text-align:center}
.collapse{position:absolute;right:6px;top:11px;width:12px;height:10px}

/* ribbon */
.ribbon{height:101px;flex:none;background:#fafafa;border-bottom:2px solid #d4d6d9;border-left:1px solid #d4d6d9;border-right:1px solid #d4d6d9;display:flex;position:relative}
.rgroup{display:flex;height:94px;margin-top:3px;border-right:1px solid #a9adb3}
.g1{width:103px;padding-left:16px}
.g2{width:207px;padding-left:11px;gap:16px}
.g3{width:297px;padding-left:13px;gap:16px}
.ritem{display:flex;flex-direction:column;align-items:center;position:relative;white-space:nowrap;line-height:20px;color:#333}
.ric{width:36px;height:36px;margin:11px -12px 9px}
.rdrop{position:absolute;width:8px;height:5px;left:26px;bottom:5px}
.apptxt{font:700 13px "Noto Sans",sans-serif;fill:#4a5a70;text-anchor:middle}
.meter{position:absolute;right:1px;top:16px;width:11px;height:73px;background:#2b2f3a;border:1.500px solid #3c8ae8;border-radius:3px;box-shadow:0 2px 4px rgba(0,0,0,.25)}
.meter i{position:absolute;left:0;right:0;bottom:0;top:8px;background:#17b65c;border-radius:2px}

/* main */
.main{flex:1;min-height:0;display:flex}
.panel{width:575px;flex:none;display:flex;flex-direction:column;background:#eceef1;position:relative}
.phead{height:34px;flex:none;display:flex;align-items:center;padding:0 18px 6px 5px;color:#6b7480}
.phead span{margin-right:auto}
.p-ff{width:14px;height:12px}
.p-x{width:12px;height:12px;margin-left:17px;margin-right:-2px}
.ptabs{height:18px;flex:none;display:flex;width:568px}
.ptab{padding:0 7px;line-height:19px;height:19px;margin-left:1px;color:#444;white-space:nowrap}
.ptab.on{background:#fff;width:47px;margin-left:0;padding:0 7px;border:1px solid #c6c9cd;border-bottom:0;position:relative;z-index:1;border-radius:2px 2px 0 0}
.tree{height:361px;flex:none;width:567px;margin-left:1px;background:#fff linear-gradient(#dcdfe2,#dcdfe2) no-repeat 36px 40px/2px 330px;border:1px solid #bcbfc3;border-radius:0 3px 3px 3px;padding-top:6px;position:relative;overflow:hidden}
.row{height:22px;display:flex;align-items:center;position:relative;color:#333;white-space:nowrap}
.row.l0{padding-left:3px}
.row.l1{padding-left:28px}
.row.l2{padding-left:53px}
.row.dim{color:#8a8f96}
.exp,.noexp{width:16px;height:16px;margin-right:8px;position:relative;z-index:1}
.exp{border:1px solid #b3b7bc;border-radius:50%;background:#fff}
.exp::before{content:"";position:absolute;left:3px;right:3px;top:6px;height:2px;background:#7e848c}
.exp.plus::after{content:"";position:absolute;top:3px;bottom:3px;left:6px;width:2px;background:#7e848c}
.ti{width:20px;height:20px;margin-right:6px;position:relative;z-index:1}
.br::before{content:"";position:absolute;left:61px;top:0;bottom:0;width:1px;background:#cfd2d6}
.br.end::before{bottom:50%}
.br::after{content:"";position:absolute;left:61px;top:50%;width:15px;height:1px;background:#cfd2d6}
.xt{font:italic 18px "Liberation Serif",serif;fill:#2d4470}
.xts{font-size:12px}
.sb-thumb{position:absolute;left:555px;top:27px;width:6px;height:205px;background:#a8adb2}
.sb-up,.sb-down{position:absolute;left:553px;width:0;height:0;border-left:5px solid transparent;border-right:5px solid transparent}
.sb-up{top:17px;border-bottom:6px solid #6e7781}
.sb-down{top:349px;border-top:6px solid #6e7781}
.props{margin-top:5px;width:567px;margin-left:1px;flex:none;border-bottom:1px solid #c9cbce}
.pr{display:grid;grid-template-columns:125px 1fr;height:25px;line-height:25px}
.ph{background:#adb1b5;border-bottom:1px solid #70757b;border-radius:3px 3px 0 0;color:#333;height:25px}
.ph div:first-child{padding-left:11px;border-right:1px solid #bfc3c7}
.ph div:last-child{padding-left:11px}
.pg{background:#bcd0e3;color:#5d6877;font-weight:500}
.pg div{padding-left:28px}
.pv{background:#fff;color:#333;position:relative}
.pv::before{content:"";position:absolute;left:12px;top:0;width:13px;height:13px;border-left:1px solid #cfd2d6;border-bottom:1px solid #cfd2d6}
.pv div:first-child{padding-left:28px;border-right:1px solid #c9cbce}
.pv div:last-child{padding-left:3px}
.pfill{flex:1;margin-left:0;width:568px;border-left:1px solid #c9cbce;border-right:1px solid #c9cbce;border-bottom:1px solid #a9adb3}
.btabs{height:22px;flex:none;display:flex;width:568px}
.btab{width:46px;text-align:center;line-height:22px;color:#333}
.btab.gray{background:#adb1b5;border:1px solid #c4c7cb;border-bottom:0;margin-top:1px}
.bstrip{flex:1;background:#fff}

/* toolbar */
.work{flex:1;min-width:0;display:flex;flex-direction:column}
.toolbar{height:36px;flex:none;background:#fff;display:flex;align-items:center;padding-left:5px}
.tsep{width:1px;height:28px;background:#c6c9cd}
.s1{margin-left:6px}
.s2{margin-left:6px}
.s3{margin-left:6px}
.s4{margin-left:9px;background:#9da2a8;height:32px}
.t-cam{width:27px;height:24px}
.t-mag{width:29px;height:26px;margin-left:6px}
.t-broom{width:25px;height:26px;margin-left:9px}
.t-chev{width:10px;height:6px;margin-left:3px}
.t-box{width:26px;height:27px;margin-left:5px}
.t-grid{width:26px;height:26px;margin-left:9px}
.t-fit{width:27px;height:27px;margin-left:6px}
.t-axes{width:24px;height:24px;margin-left:12px}
.t-rot{width:25px;height:26px;margin-left:11px}
.t-rot2{width:26px;height:26px;margin-left:13px}
.ax{font:700 8px "Liberation Sans",sans-serif;fill:#3a4250}
.tdots{width:0;height:28px;border-left:2px dotted #9aa0a7;margin-left:8px}
.tlabel{width:53px;margin-left:10px;white-space:nowrap;color:#333}
.sel{height:24px;border:1px solid #a9adb3;border-radius:3px;background:#fff;display:flex;align-items:center;justify-content:space-between;padding:0 6px 0 4px;color:#333}
.s-time{width:79px}
.t-chev2{width:10px;height:6px}
.slider{width:83px;height:24px;margin-left:8px;position:relative}
.track{position:absolute;left:0;right:0;top:6px;height:5px;background:#e7e9ec;border:1px solid #c3c6ca;border-radius:2px}
.thumb{position:absolute;right:0;top:7px;width:12px;height:12px;background:#eceef0;border:1px solid #c0c3c7}
.spin{width:50px;margin-left:8px;padding-right:4px}
.updown{width:10px;height:20px}
.t-rec{width:29px;height:18px;margin-left:10px}
.t-first{width:20px;height:22px;margin-left:14px}
.t-prev{width:24px;height:22px;margin-left:16px}
.t-play{width:17px;height:20px;margin-left:19px}
.t-next{width:23px;height:22px;margin-left:17px}
.t-last{width:20px;height:22px;margin-left:16px}
.t-exp{width:23px;height:22px;margin-left:17px}
.s-speed{width:80px;margin-left:8px}

/* viewport */
.viewport{flex:1;position:relative;background:linear-gradient(#b9cde3,#e7e9ee);overflow:hidden}
.model{position:absolute;left:0;top:0;width:1345px;height:790px}
.tz,.ty,.tx{font:700 14px "Liberation Sans",sans-serif}
.tz{fill:#2020f0}
.ty{fill:#20e020}
.tx{fill:#f02020}
.legend{position:absolute;left:1246px;top:435px;font-family:"DejaVu Sans",sans-serif;color:#222}
.lg-title{font-family:"Liberation Sans",sans-serif;font-size:16px;line-height:18px;height:18px}
.lg-unit{padding-left:3px;word-spacing:2px;margin-bottom:11px}
.lg-body{display:flex;gap:2px}
.lg-bar{width:15px;height:274px;background:linear-gradient(#ff0000,#ffff00 25%,#00ff00 50%,#00ffff 75%,#0000ff)}
.lg-labels{display:flex;flex-direction:column;justify-content:space-between;font-size:10px;line-height:14px;margin-top:-8px;height:290px;white-space:nowrap}
.caption{position:absolute;left:566px;top:763px;white-space:nowrap;color:#333;line-height:20px;letter-spacing:.2px}

/* status */
.status{height:33px;flex:none;background:#eceef1;border-top:1px solid #b3b6ba;border-bottom:1px solid #b3b6ba;display:flex;align-items:center;justify-content:space-between;padding:0 1px 0 6px;color:#717883}
.dims{color:#444;letter-spacing:.4px}

/* taskbar */
.taskbar{height:50px;flex:none;background:#1b1b1b;display:flex;align-items:center;color:#fff;position:relative}
.b-win{width:20px;height:20px;margin-left:20px}
.b-find{width:17px;height:20px;margin-left:44px}
.bsearch{width:275px;height:43px;margin-left:19px;margin-top:-1px;background:#ececec;display:flex;align-items:center;color:#111;padding-left:8px}
.b-ie{width:22px;height:26px}
.ie{font:700 28px "Liberation Sans",sans-serif;fill:#2b8fe8;text-anchor:middle}
.b-mini{width:7px;height:5px;margin-left:5px}
.bq{margin-left:8px;width:162px;white-space:nowrap}
.bgo{width:70px;height:43px;background:#1e88f5;color:#fff;line-height:43px;text-align:center;white-space:nowrap}
.bsep{width:2px;height:26px;background:#4a4a4a;margin-left:9px}
.bapp{width:61px;height:50px;display:flex;align-items:center;justify-content:center;position:relative}
.a-folder{margin-left:14px}
.a-folder svg{width:28px;height:24px}
.a-excel{margin-left:1px}
.a-excel svg,.a-word svg{width:30px;height:28px}
.a-word{margin-left:1px}
.a-sim{margin-left:1px}
.a-sim svg,.a-cur svg{width:30px;height:30px}
.a-cur{background:#484848;margin-left:2px}
.on1::after,.on2::after{content:"";position:absolute;left:0;right:0;bottom:0;height:3px;background:#76b9ed}
.xl{font:700 10px "Liberation Sans",sans-serif;fill:#fff;text-anchor:middle}
.tray{margin-left:auto;display:flex;align-items:center;height:50px;padding-right:0}
.y-help{width:26px;height:26px}
.qm{font:700 18px "Liberation Sans",sans-serif;fill:#fff;text-anchor:middle}
.y-up{width:16px;height:9px;margin-left:13px}
.y-wifi{width:15px;height:15px;margin-left:15px}
.y-game{width:20px;height:20px;margin-left:12px}
.y-ava{width:20px;height:20px;margin-left:10px}
.y-bat{width:20px;height:13px;margin-left:10px}
.y-vol{width:20px;height:16px;margin-left:10px}
.y-ime{font-size:20px;margin-left:8px;width:21px;line-height:26px;white-space:nowrap}
.y-pin{width:20px;height:20px;background:#fff;color:#111;font-size:15px;line-height:19px;text-align:center;margin-left:16px}
.clock{width:95px;margin-left:18px;display:flex;flex-direction:column;align-items:center;line-height:20px;font-size:15px;white-space:nowrap}
.notify{position:relative;width:20px;height:20px;margin-left:18px}
.notify svg{width:20px;height:18px}
.badge{position:absolute;left:9px;top:6px;width:20px;height:20px;border-radius:50%;background:#3a3a3a;border:1.500px solid #888;font-size:13px;font-weight:700;line-height:17px;text-align:center;color:#ddd}
.edge{width:1px;height:50px;background:#555;margin-left:25px;margin-right:5px}
```
